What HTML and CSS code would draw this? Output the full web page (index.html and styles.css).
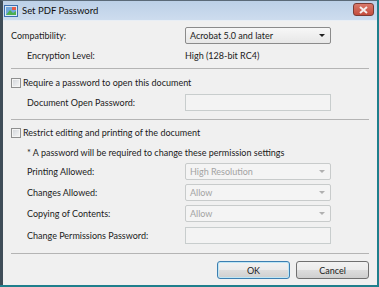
FILE: index.html
```html
<!DOCTYPE html>
<html lang="en">
<head>
    <meta charset="UTF-8">
    <title>Set PDF Password</title>
    <link rel="stylesheet" href="styles.css">
</head>
<body>
    <div class="window">
        <div class="titlebar">
            <svg class="app-icon" width="14" height="12" viewBox="0 0 14 12">
                <rect x="0.5" y="0.5" width="13" height="11" fill="#dbe9f7" stroke="#3b6fb0"/>
                <rect x="2" y="2" width="10" height="8" fill="#6fa6dc"/>
                <path d="M2 10 L6 5 L9 8 L12 6 L12 10 Z" fill="#4caf50"/>
                <rect x="8" y="2" width="4" height="3" fill="#e25b4a"/>
            </svg>
            <span class="title">Set PDF Password</span>
            <span class="close-btn">
                <svg width="9" height="8" viewBox="0 0 9 8">
                    <path d="M1 1 L8 7 M8 1 L1 7" stroke="#f4eeee" stroke-width="2"/>
                </svg>
            </span>
        </div>

        <div class="client">
            <div class="row first">
                <span class="lbl">Compatibility:</span>
                <div class="select">
                    <span>Acrobat 5.0 and later</span>
                    <i class="arrow"></i>
                </div>
            </div>
            <div class="row gap3">
                <span class="lbl indent">Encryption Level:</span>
                <span class="value">High (128-bit RC4)</span>
            </div>

            <div class="sep sep-a"></div>

            <div class="row check-row gap5">
                <span class="checkbox"></span>
                <span>Require a password to open this document</span>
            </div>
            <div class="row gap3">
                <span class="lbl indent">Document Open Password:</span>
                <div class="input"></div>
            </div>

            <div class="sep sep-b"></div>

            <div class="row check-row gap4">
                <span class="checkbox"></span>
                <span>Restrict editing and printing of the document</span>
            </div>
            <div class="row note gap3">
                <span class="lbl indent">* A password will be required to change these permission settings</span>
            </div>
            <div class="row gap2">
                <span class="lbl indent">Printing Allowed:</span>
                <div class="select disabled">
                    <span>High Resolution</span>
                    <i class="arrow"></i>
                </div>
            </div>
            <div class="row gap4">
                <span class="lbl indent">Changes Allowed:</span>
                <div class="select disabled">
                    <span>Allow</span>
                    <i class="arrow"></i>
                </div>
            </div>
            <div class="row gap4">
                <span class="lbl indent">Copying of Contents:</span>
                <div class="select disabled">
                    <span>Allow</span>
                    <i class="arrow"></i>
                </div>
            </div>
            <div class="row gap5">
                <span class="lbl indent">Change Permissions Password:</span>
                <div class="input"></div>
            </div>

            <div class="sep sep-c"></div>

            <div class="buttons">
                <button class="btn default">OK</button>
                <button class="btn">Cancel</button>
            </div>
        </div>
    </div>
</body>
</html>
```

FILE: styles.css
```css
* {
    margin: 0;
    padding: 0;
    box-sizing: border-box;
}

body {
    width: 379px;
    height: 287px;
    overflow: hidden;
    background: #1f7f8c;
    font-family: Lato, "Liberation Sans", sans-serif;
    font-size: 9px;
    color: #1b1b1b;
}

.window {
    width: 377px;
    height: 285px;
    background: #f0f0f0;
    border-left: 3px solid #3f4d58;
    border-top: 1px solid #5b6a78;
}

.titlebar {
    height: 20px;
    display: flex;
    align-items: center;
    padding-left: 1px;
    background: linear-gradient(#bcd0e7, #cddcee);
    border-bottom: 1px solid #e8eef5;
}

.app-icon {
    margin-right: 4px;
}

.title {
    font-size: 9.5px;
    color: #101010;
    flex: 1;
}

.close-btn {
    width: 21px;
    height: 13px;
    margin-right: 3px;
    margin-top: -2px;
    display: flex;
    align-items: center;
    justify-content: center;
    background: linear-gradient(#d9796b, #c44c3c);
    border: 1px solid #7a3b34;
    border-radius: 3px;
}

.client {
    padding: 6px 5px 0 8px;
}

.row {
    height: 17px;
    display: grid;
    grid-template-columns: 174px 146px;
    align-items: center;
}

.first { margin-top: 0; }
.gap2 { margin-top: 2px; }
.gap3 { margin-top: 3px; }
.gap4 { margin-top: 4px; }
.gap5 { margin-top: 5px; }

.lbl.indent {
    padding-left: 16px;
}

.note .lbl {
    grid-column: 1 / 3;
    white-space: nowrap;
}

.check-row {
    display: flex;
    gap: 2px;
}

.checkbox {
    width: 10px;
    height: 10px;
    border: 1px solid #8e8f8f;
    background: linear-gradient(135deg, #d0d4d9, #f7f7f7);
    box-shadow: inset 0 0 0 1px #f4f4f4;
}

.select {
    height: 17px;
    display: flex;
    align-items: center;
    justify-content: space-between;
    padding: 0 5px 0 4px;
    border: 1px solid #8b8b8b;
    border-radius: 2px;
    background: linear-gradient(#f7f7f7, #e7e7e7);
}

.arrow {
    width: 0;
    height: 0;
    border-left: 3px solid transparent;
    border-right: 3px solid transparent;
    border-top: 3px solid #202020;
}

.select.disabled {
    color: #a3a3a3;
    border-color: #c8cbcb;
    background: #f4f4f4;
}

.select.disabled .arrow {
    border-top-color: #b0b0b0;
}

.input {
    height: 17px;
    border: 1px solid #c8cdcd;
    background: #f3f3f3;
}

.sep {
    height: 1px;
    background: #b4b4b4;
    margin-right: 3px;
}

.sep-a { margin-top: 4px; }
.sep-b { margin-top: 8px; }
.sep-c { margin-top: 9px; }

.buttons {
    display: flex;
    justify-content: flex-end;
    gap: 6px;
    margin-top: 7px;
    margin-right: 3px;
}

.btn {
    width: 73px;
    height: 18px;
    font-family: inherit;
    font-size: 9px;
    color: #1b1b1b;
    border: 1px solid #707070;
    border-radius: 3px;
    background: linear-gradient(#f2f2f2 0%, #ebebeb 50%, #dddddd 51%, #cfcfcf 100%);
}

.btn.default {
    border-color: #3c7fb1;
    box-shadow: inset 0 0 0 1px #bfe6f5;
}
```
